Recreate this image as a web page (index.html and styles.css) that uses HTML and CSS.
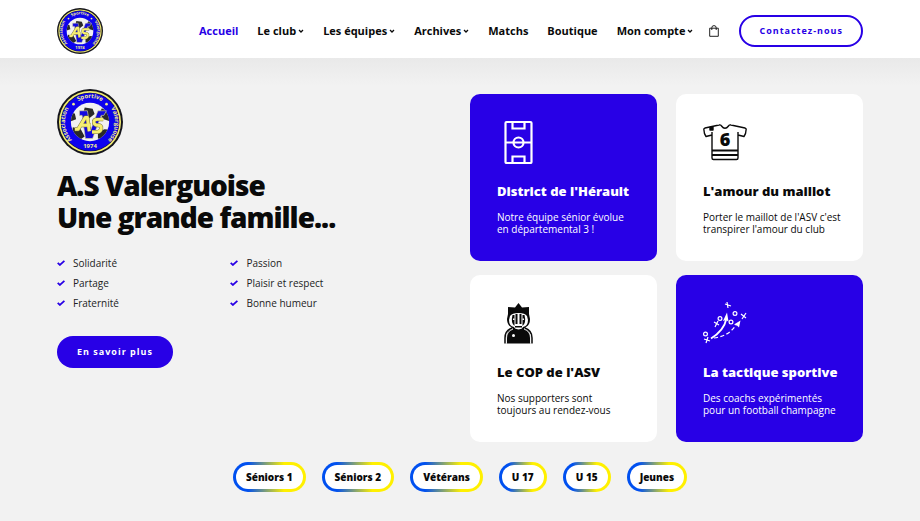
FILE: index.html
```html
<!DOCTYPE html>
<html lang="fr">
<head>
<meta charset="utf-8">
<meta name="viewport" content="width=device-width, initial-scale=1">
<title>A.S Valerguoise</title>
<link rel="stylesheet" href="styles.css">
</head>
<body>
<svg class="defs" aria-hidden="true">
  <defs>
    <path id="arc-left" d="M30 83A39 39 0 0 1 24 22"/>
    <path id="arc-top" d="M23 27A34 34 0 0 1 77 27"/>
    <path id="arc-right" d="M76 22A39 39 0 0 1 70 83"/>
    <clipPath id="ball-clip"><circle cx="50" cy="50" r="29"/></clipPath>
  </defs>
  <symbol id="crest" viewBox="0 0 100 100">
    <circle cx="50" cy="50" r="50" fill="#15151c"/>
    <circle cx="50" cy="50" r="47" fill="#f2ec74"/>
    <circle cx="50" cy="50" r="44.500" fill="#15153c"/>
    <circle cx="50" cy="50" r="43.500" fill="#0d02ee"/>
    <circle cx="50" cy="50" r="29" fill="#f1f1f1"/>
    <g clip-path="url(#ball-clip)" fill="#292929">
      <path d="M42 28l12 2 3 8-9 7-9-6zM68 29l14 8-2 12-9-3-7-9zM24 58l12 3 6 11-6 4-14-6zM62 65l10-4 10 1-8 15-12-2zM20 36l7 1 2 9-8 3z"/>
    </g>
    <g fill="#f3ed8d" class="crest-text">
      <text><textPath href="#arc-left" startOffset="50%" text-anchor="middle">Association</textPath></text>
      <text><textPath href="#arc-top" startOffset="50%" text-anchor="middle">Sportive</textPath></text>
      <text><textPath href="#arc-right" startOffset="50%" text-anchor="middle">Valerguoise</textPath></text>
      <text x="50" y="90" text-anchor="middle">1974</text>
      <circle cx="25" cy="23" r="2"/>
      <circle cx="75" cy="23" r="2"/>
    </g>
    <path d="M34 33h12l5 29 11-29h13l-4 7h-4L54 75H43L38 40h-4z" fill="#1208e0" stroke="#d9d697" stroke-width="1"/>
    <g fill="none" stroke-linejoin="round">
      <path d="M27 61h5L43 43h3l3 21M34 55h17M70 46H61q-6 0-5 5 1 4 6 4 6 0 5 5-1 5-6 5h-8" stroke="#77733d" stroke-width="6"/>
      <path d="M27 61h5L43 43h3l3 21M34 55h17M70 46H61q-6 0-5 5 1 4 6 4 6 0 5 5-1 5-6 5h-8" stroke="#f5ee72" stroke-width="4.500"/>
    </g>
  </symbol>
  <symbol id="chevron" viewBox="0 0 6 6"><path d="M1 2l2 2 2-2" fill="none" stroke="currentColor" stroke-width="1.3"/></symbol>
  <symbol id="check" viewBox="0 0 8 6"><path d="M.7 2.800l2.200 2.100L7.400.8" fill="none" stroke="currentColor" stroke-width="1.800"/></symbol>
</svg>

<header class="header">
  <a class="brand" href="#" aria-label="A.S Valerguoise"><svg class="crest-small"><use href="#crest"/></svg></a>
  <nav class="nav">
    <a class="active" href="#">Accueil</a>
    <a href="#">Le club<svg><use href="#chevron"/></svg></a>
    <a href="#">Les équipes<svg><use href="#chevron"/></svg></a>
    <a href="#">Archives<svg><use href="#chevron"/></svg></a>
    <a href="#">Matchs</a>
    <a href="#">Boutique</a>
    <a href="#">Mon compte<svg><use href="#chevron"/></svg></a>
  </nav>
  <a class="cart" href="#" aria-label="Panier">
    <svg viewBox="0 0 10 12"><path d="M.7 3.200h8.600v8.100H.7zM2.800 5V2.800a2.200 2.200 0 0 1 4.400 0V5" fill="none" stroke="currentColor" stroke-width=".9"/></svg>
  </a>
  <a class="button outline" href="#">Contactez-nous</a>
</header>

<main class="main">
  <div class="hero">
    <section class="intro">
      <svg class="crest-large" aria-hidden="true"><use href="#crest"/></svg>
      <h1>A.S Valerguoise<br>Une grande famille...</h1>
      <ul class="values">
        <li><svg><use href="#check"/></svg>Solidarité</li>
        <li><svg><use href="#check"/></svg>Passion</li>
        <li><svg><use href="#check"/></svg>Partage</li>
        <li><svg><use href="#check"/></svg>Plaisir et respect</li>
        <li><svg><use href="#check"/></svg>Fraternité</li>
        <li><svg><use href="#check"/></svg>Bonne humeur</li>
      </ul>
      <a class="button" href="#">En savoir plus</a>
    </section>

    <section class="cards">
      <article class="card blue">
        <svg class="icon" viewBox="0 0 44 44" fill="none" stroke="currentColor" stroke-width="2.200">
          <rect x="8.500" y="2" width="26" height="41" rx="1"/>
          <path d="M15.500 2v6.500h12V2M15.500 43v-6.500h12V43M8 22.500h8.500M26.500 22.500H35M16.500 22.500h10"/>
          <circle cx="21.500" cy="22.500" r="5"/>
        </svg>
        <h2>District de l'Hérault</h2>
        <p>Notre équipe sénior évolue<br>en départemental 3 !</p>
      </article>
      <article class="card">
        <svg class="icon" viewBox="0 0 44 44" fill="none" stroke="currentColor" stroke-width="1.400" stroke-linejoin="round">
          <path d="M9 38V15l-6 1.500Q1 14 .8 9L2 8 16 5q2-.5 2.500 1 3.500 4.500 7 0 .5-1.500 2.500-1l14 3 1.200 1q-.2 5-2.200 7.500L35 15v23q0 1.500-1.500 1.500h-23Q9 39.500 9 38zM9 15v-3M35 15v-3"/>
          <path d="M9 30.500h26M9 35h26" stroke-width="2"/>
          <path d="M7 7.500l3-.5v3H7z" fill="currentColor"/>
          <text class="shirt-number" x="22" y="26" text-anchor="middle" fill="currentColor" stroke="none">6</text>
        </svg>
        <h2>L'amour du maillot</h2>
        <p>Porter le maillot de l'ASV c'est<br>transpirer l'amour du club</p>
      </article>
      <article class="card">
        <svg class="icon" viewBox="0 0 44 44">
          <path fill="currentColor" d="M11 6l7 .5L21.500 2 25 6.500l7-.5v7l1 5q0 6-4 8l-2 2H16l-2-2q-4-2-4-8l1-5z"/>
          <path fill="#fff" d="M13 15q2-3 8.500-3t8.500 3l1 4q0 6-5 7l-2 3h-5l-2-3q-5-1-5-7z"/>
          <path fill="currentColor" d="M15.500 14h2v11q-4-3-2-11zM18.500 13h2v10h-2zM22.500 13h2v10h-2zM27.500 14h-2v11q4-3 2-11zM18 25h7v1.500h-7z"/>
          <path fill="#fff" d="M16 17.500h1.500V19H16zM25.500 17.500H27V19h-1.500z"/>
          <path fill="currentColor" d="M9.500 42.500V37q0-9 8-9.500l4 1 4-1q8 .5 8 9.500v5.500z"/>
          <path d="M8 42.500V37q0-7.500 7-10M35 42.500V37q0-7.500-7-10" fill="none" stroke="currentColor" stroke-width="1.500"/>
          <path d="M9.500 42.500V37q0-6.500 6.500-9M33.500 42.500V37q0-6.500-6.500-9" fill="none" stroke="#fff" stroke-width=".9"/>
          <circle cx="16.500" cy="34.500" r="1.500" fill="#fff"/>
        </svg>
        <h2>Le COP de l'ASV</h2>
        <p>Nos supporters sont<br>toujours au rendez-vous</p>
      </article>
      <article class="card blue">
        <svg class="icon" viewBox="0 0 44 44" fill="none" stroke="currentColor" stroke-width="1.200">
          <path d="M8 37.500q13-8 15.500-20" stroke-width="1.800"/>
          <path d="M24 11.500l1.500 9-2.500-1.500-3 1z" fill="currentColor" stroke="none"/>
          <path d="M11 37q15-2 22-13" stroke-dasharray="4 2.500"/>
          <path d="M37.500 19.500l-1.500 7-2-2-3-1z" fill="currentColor" stroke="none"/>
          <path d="M24 1l1 6M22 3l6 2M11 21l5 3M15 20l-3 6M38 13l5 4M43 12l-4 6M1 38l6 2M5 36l-2 6"/>
          <circle cx="2.500" cy="33" r="1.900"/><circle cx="17" cy="17.500" r="1.900"/><circle cx="32" cy="12.500" r="1.900"/><circle cx="28" cy="21" r="1.900"/>
        </svg>
        <h2>La tactique sportive</h2>
        <p>Des coachs expérimentés<br>pour un football champagne</p>
      </article>
    </section>
  </div>

  <nav class="teams" aria-label="Catégories">
    <a href="#">Séniors 1</a>
    <a href="#">Séniors 2</a>
    <a href="#">Vétérans</a>
    <a href="#">U 17</a>
    <a href="#">U 15</a>
    <a href="#">Jeunes</a>
  </nav>
</main>
</body>
</html>
```
FILE: styles.css
```css
* { box-sizing: border-box; }

body {
  margin: 0;
  background: #f2f2f2;
  color: #0a0a0a;
  font-family: "Open Sans", sans-serif;
  font-size: 10px;
}

a { color: inherit; text-decoration: none; }
h1, h2, p, ul { margin: 0; padding: 0; }

.defs { position: absolute; width: 0; height: 0; }
.crest-text { font-size: 9px; font-weight: 700; }

.header {
  display: flex;
  align-items: center;
  padding: 8px 57px 4px;
  background: #fff;
}
.brand { margin-right: auto; }
.crest-small { display: block; width: 46px; height: 46px; }

.nav { display: flex; gap: 19px; font-size: 11px; font-weight: 700; line-height: 16px; }
.nav a { display: flex; align-items: center; gap: 2px; white-space: nowrap; }
.nav svg { width: 6px; height: 6px; }
.nav .active { color: #2800e6; }

.cart { margin: 0 20px 0 16px; }
.cart svg { display: block; width: 10px; height: 12px; }

.button {
  display: inline-block;
  padding: 8px 20px;
  border-radius: 16px;
  background: #2800e6;
  color: #fff;
  font-size: 9px;
  font-weight: 700;
  line-height: 16px;
  letter-spacing: 1px;
  white-space: nowrap;
}
.button.outline {
  padding: 6px 18px;
  border: 2px solid #2800e6;
  background: #fff;
  color: #2800e6;
}

.main {
  padding: 31px 57px 28px;
  background: linear-gradient(#e9e9e9, #f2f2f2 28px);
}

.hero { display: grid; grid-template-columns: 413fr 393fr; }

.crest-large { display: block; width: 66px; height: 66px; }
h1 {
  margin-top: 14px;
  font-size: 28px;
  font-weight: 800;
  line-height: 32px;
  letter-spacing: -1px;
  white-space: nowrap;
}

.values {
  display: grid;
  grid-template-columns: 1fr 1fr;
  width: 84%;
  margin: 20px 0 23px;
  list-style: none;
  font-size: 10px;
  line-height: 20px;
  color: #222;
}
.values li { display: flex; align-items: center; gap: 8px; }
.values svg { width: 8px; height: 6px; color: #2800e6; }

.cards {
  display: grid;
  grid-template-columns: 1fr 1fr;
  gap: 14px 19px;
  padding-top: 5px;
}
.card { padding: 26px 20px 26px 27px; border-radius: 10px; background: #fff; }
.card.blue { background: #2800e6; color: #fff; }
.icon { display: block; width: 44px; height: 44px; }
.shirt-number { font-size: 18px; font-weight: 800; }
.card h2 { margin: 18px 0 11px; font-size: 13px; font-weight: 800; line-height: 18px; white-space: nowrap; }
.card p { font-size: 10px; line-height: 12px; white-space: nowrap; }

.teams { display: flex; justify-content: center; gap: 16px; margin-top: 20px; }
.teams a {
  padding: 4px 10px;
  border: 3px solid transparent;
  border-radius: 15px;
  background:
    linear-gradient(#fff, #fff) padding-box,
    linear-gradient(90deg, #0050f0 20%, #fff000 70%) border-box;
  font-size: 10px;
  font-weight: 800;
  line-height: 16px;
}
```
